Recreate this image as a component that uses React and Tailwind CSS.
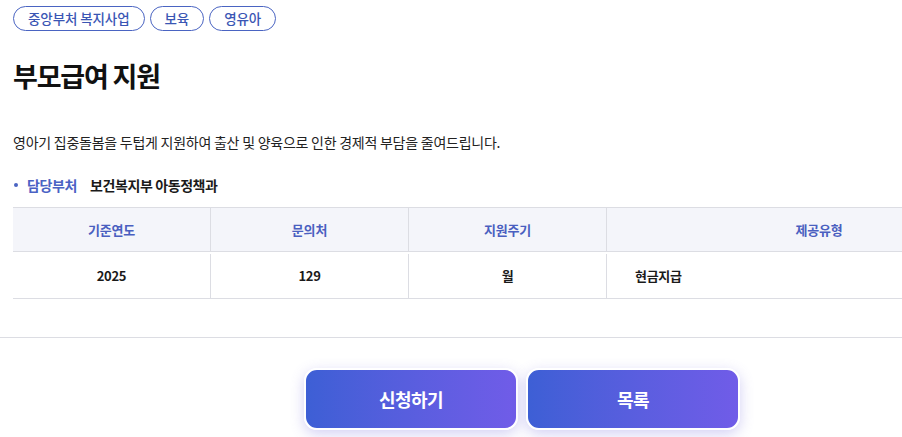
import React from "react";

const tags = ["중앙부처 복지사업", "보육", "영유아"];

const columns = [
  { head: "기준연도", value: "2025", align: "text-center" },
  { head: "문의처", value: "129", align: "text-center" },
  { head: "지원주기", value: "월", align: "text-center" },
  { head: "제공유형", value: "현금지급", align: "text-left pl-[28px]" },
];

export default function App() {
  return (
    <div className="w-full h-[437px] overflow-hidden bg-white" style={{ fontFamily: '"Noto Sans CJK KR", "Noto Sans", sans-serif' }}>
      <div className="w-[1044px] pt-[6px]">
        <div className="px-[13px]">
          {/* Tags */}
          <div className="flex gap-[5px]">
            {tags.map((tag) => (
              <span
                key={tag}
                className="h-[25px] px-[14px] flex items-center rounded-full border border-[#4a64c2] text-[13.5px] font-medium text-[#3a56b4] tracking-[-0.1px]"
              >
                {tag}
              </span>
            ))}
          </div>

          {/* Title */}
          <h1 className="mt-[27px] text-[27px] leading-[36px] font-bold text-[#111] tracking-[-1.2px]">부모급여 지원</h1>

          {/* Description */}
          <p className="mt-[38px] text-[14px] leading-[20px] text-[#222] tracking-[-0.25px]">
            영아기 집중돌봄을 두텁게 지원하여 출산 및 양육으로 인한 경제적 부담을 줄여드립니다.
          </p>

          {/* Department */}
          <div className="mt-[23px] flex items-center text-[14px] leading-[20px] tracking-[-0.4px]">
            <span className="w-[4px] h-[4px] rounded-full bg-[#4a64c2] ml-[1px] mr-[9px]" />
            <span className="font-semibold text-[#4a62c4] w-[63px]">담당부처</span>
            <span className="font-semibold text-[#1a1a1a]">보건복지부 아동정책과</span>
          </div>

          {/* Table */}
          <div className="mt-[12px] border-t border-[#dcdde3]">
            <div className="grid grid-cols-[197px_198px_198px_1fr] bg-[#f4f5fa] border-b border-[#dcdde3]">
              {columns.map((col, i) => (
                <div
                  key={col.head}
                  className={`h-[43px] flex items-center justify-center text-[13px] font-semibold text-[#4a5fc0] tracking-[-0.2px] ${i > 0 ? "border-l border-[#dcdde3]" : ""}`}
                >
                  {col.head}
                </div>
              ))}
            </div>
            <div className="grid grid-cols-[197px_198px_198px_1fr] pt-[2px] border-b border-[#dcdde3]">
              {columns.map((col, i) => (
                <div
                  key={col.head}
                  className={`h-[44px] flex items-center text-[13px] font-bold text-[#1a1a1a] tracking-[-0.3px] ${col.align === "text-center" ? "justify-center" : "pl-[28px]"} ${i > 0 ? "border-l border-[#dcdde3]" : ""}`}
                >
                  {col.value}
                </div>
              ))}
            </div>
          </div>
        </div>

        {/* Divider */}
        <div className="mt-[38px] border-t border-[#dcdde3]" />

        {/* Buttons */}
        <div className="mt-[30px] flex justify-center gap-[8px]">
          {["신청하기", "목록"].map((label) => (
            <button
              key={label}
              className="w-[214px] h-[62px] rounded-[13px] border-2 border-white bg-gradient-to-r from-[#3d5fd5] to-[#705ce8] text-white text-[18px] font-bold tracking-[-0.5px] shadow-[0_4px_14px_rgba(110,100,220,0.3)]"
            >
              {label}
            </button>
          ))}
        </div>
      </div>
    </div>
  );
}
